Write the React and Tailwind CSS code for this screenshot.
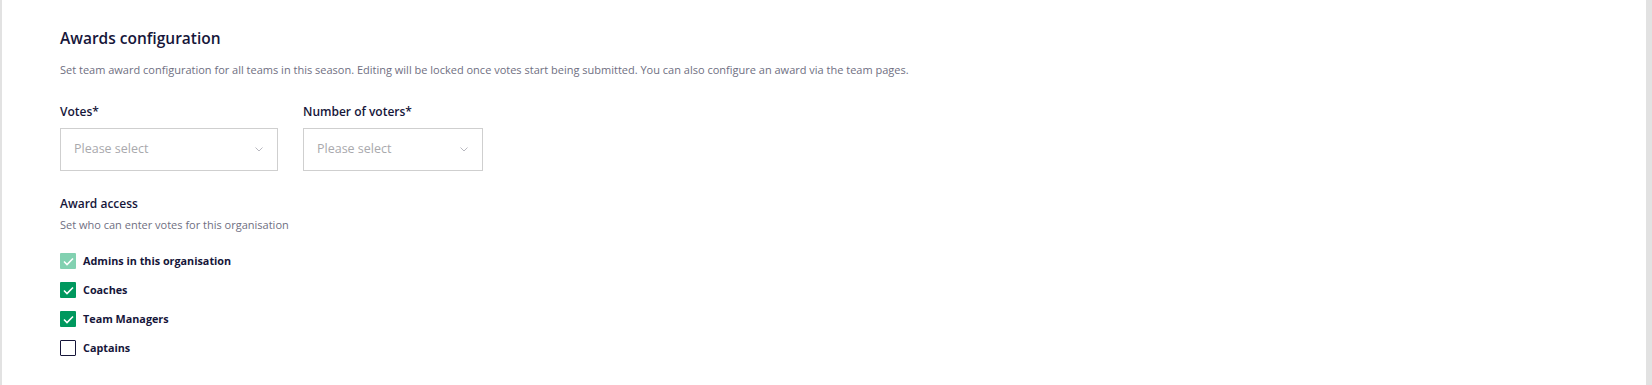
export default function App() {
  const items = [
    { label: "Admins in this organisation", state: "disabled" },
    { label: "Coaches", state: "checked" },
    { label: "Team Managers", state: "checked" },
    { label: "Captains", state: "unchecked" },
  ];
  const Chevron = () => (
    <svg width="8" height="5" viewBox="0 0 8 5" fill="none">
      <path d="M0.5 0.5L4 4L7.5 0.5" stroke="#b8b8c0" strokeWidth="1" />
    </svg>
  );
  const Select = ({ w }) => (
    <div className={`flex h-[43px] ${w} items-center justify-between border border-[#cfcfcf] bg-white pl-[13px] pr-[14px]`}>
      <span className="text-[12.5px] text-[#a9a9ad]">Please select</span>
      <Chevron />
    </div>
  );
  return (
    <div
      className="flex h-[385px] w-full bg-white"
      style={{ fontFamily: "'Open Sans', 'Noto Sans', sans-serif" }}
    >
      <div className="w-[2px] shrink-0 bg-[#e2e2e2]" />
      <div className="flex-1 pl-[58px] pt-[27px]">
        <h2 className="text-[15.5px] font-semibold leading-[22px] text-[#16163a]">Awards configuration</h2>
        <p className="mt-[14px] text-[11px] leading-[14px] text-[#6f6f82]">
          Set team award configuration for all teams in this season. Editing will be locked once votes start being submitted. You can also configure an award via the team pages.
        </p>
        <div className="mt-[27px] flex gap-[25px]">
          <div className="flex flex-col">
            <label className="text-[12px] font-semibold leading-[16px] text-[#16163a]">Votes*</label>
            <div className="mt-[8px]">
              <Select w="w-[218px]" />
            </div>
          </div>
          <div className="flex flex-col">
            <label className="text-[12px] font-semibold leading-[16px] text-[#16163a]">Number of voters*</label>
            <div className="mt-[8px]">
              <Select w="w-[180px]" />
            </div>
          </div>
        </div>
        <h3 className="mt-[25px] text-[12px] font-semibold leading-[16px] text-[#16163a]">Award access</h3>
        <p className="mt-[6px] text-[11px] leading-[14px] text-[#6f6f82]">Set who can enter votes for this organisation</p>
        <div className="mt-[21px] flex flex-col gap-[13px]">
          {items.map((it) => (
            <div key={it.label} className="flex items-center gap-[7px]">
              <div
                className={
                  it.state === "unchecked"
                    ? "flex h-[16px] w-[16px] items-center justify-center rounded-[1px] border border-[#16163a] bg-white"
                    : it.state === "disabled"
                    ? "flex h-[16px] w-[16px] items-center justify-center rounded-[1px] bg-[#82d1b1]"
                    : "flex h-[16px] w-[16px] items-center justify-center rounded-[1px] bg-[#00985e]"
                }
              >
                {it.state !== "unchecked" && (
                  <svg width="11" height="9" viewBox="0 0 11 9" fill="none">
                    <path d="M1 4.5L4 7.5L10 1.5" stroke="white" strokeWidth="1.6" />
                  </svg>
                )}
              </div>
              <span className="text-[10.8px] font-bold leading-[16px] text-[#16163a]">{it.label}</span>
            </div>
          ))}
        </div>
      </div>
      <div className="w-[6px] shrink-0 bg-[#e2e2e2]" />
    </div>
  );
}
